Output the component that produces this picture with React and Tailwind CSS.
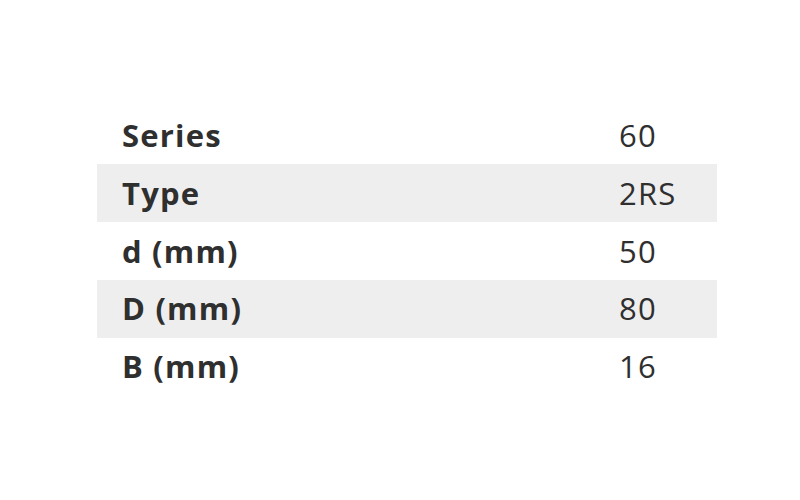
import React from 'react';

const rows = [
  { label: 'Series', value: '60' },
  { label: 'Type', value: '2RS' },
  { label: 'd (mm)', value: '50' },
  { label: 'D (mm)', value: '80' },
  { label: 'B (mm)', value: '16' },
];

const App = () => {
  return (
    <div
      className="w-[800px] h-[500px] bg-white pt-[106.5px] pl-[97px]"
      style={{ fontFamily: '"Open Sans", sans-serif' }}
    >
      <div className="w-[620px] text-[#2f2f2f] text-[31px] tracking-[1.2px]">
        {rows.map((row, i) => (
          <div
            key={row.label}
            className={`flex items-center h-[57.75px] ${i % 2 === 1 ? 'bg-[#eeeeee]' : ''}`}
          >
            <div className="w-[522px] pl-[25px] font-bold">{row.label}</div>
            <div>{row.value}</div>
          </div>
        ))}
      </div>
    </div>
  );
};

export default App;
